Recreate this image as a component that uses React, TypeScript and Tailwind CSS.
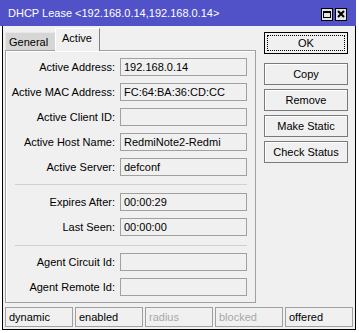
import React from 'react'

const rows1 = [
  { label: 'Active Address:', value: '192.168.0.14' },
  { label: 'Active MAC Address:', value: 'FC:64:BA:36:CD:CC' },
  { label: 'Active Client ID:', value: '' },
  { label: 'Active Host Name:', value: 'RedmiNote2-Redmi' },
  { label: 'Active Server:', value: 'defconf' },
]

const rows2 = [
  { label: 'Expires After:', value: '00:00:29' },
  { label: 'Last Seen:', value: '00:00:00' },
]

const rows3 = [
  { label: 'Agent Circuit Id:', value: '' },
  { label: 'Agent Remote Id:', value: '' },
]

const status = [
  { text: 'dynamic', disabled: false },
  { text: 'enabled', disabled: false },
  { text: 'radius', disabled: true },
  { text: 'blocked', disabled: true },
  { text: 'offered', disabled: false },
]

function Field({ label, value }: { label: string; value: string }) {
  return (
    <div className="flex items-center h-[18px]">
      <div className="w-[109px] text-right pr-[1px] whitespace-nowrap">{label}</div>
      <div className="ml-[4px] w-[127px] h-[18px] border border-[#a0a0a0] bg-[#f0f0f0] pl-[3px] leading-[16px] whitespace-nowrap overflow-hidden">
        {value}
      </div>
    </div>
  )
}

function Separator() {
  return <div className="ml-[8px] w-[232px] h-px bg-[#d0d0d0]" />
}

function SideButton({ children }: { children: React.ReactNode }) {
  return (
    <div className="w-[84px] h-[22px] border border-[#7a7a7a] bg-[#f0f0f0] flex items-center justify-center shadow-[inset_1px_1px_0_#ffffff]">
      {children}
    </div>
  )
}

export default function App() {
  return (
    <div className="w-[359px] h-[333px] bg-white overflow-hidden relative font-['Liberation_Sans',Arial,sans-serif] text-[11px] text-black">
      {/* Title bar */}
      <div className="w-[356px] h-[26px] bg-[#5151c8] flex items-center pl-[8px] pr-[9px]">
        <span className="text-white text-[11px] whitespace-nowrap">DHCP Lease &lt;192.168.0.14,192.168.0.14&gt;</span>
        <div className="ml-auto flex gap-[2px] mt-[2px]">
          <div className="w-[12px] h-[13px] border border-black bg-[#e4e4e4] flex items-center justify-center">
            <div className="w-[8px] h-[7px] border border-black border-t-2" />
          </div>
          <div className="w-[12px] h-[13px] border border-black bg-[#e4e4e4] flex items-center justify-center">
            <svg width="8" height="8" viewBox="0 0 8 8">
              <path d="M1 1L7 7M7 1L1 7" stroke="#000" strokeWidth="2" />
            </svg>
          </div>
        </div>
      </div>

      {/* Window body */}
      <div className="ml-[2px] w-[354px] h-[304px] border-x border-b border-black bg-[#f0f0f0] flex flex-col">
        <div className="flex">
          {/* Tabs and panel */}
          <div className="ml-[2px] flex flex-col">
            <div className="flex items-end h-[24px] pt-[2px]">
              <div className="w-[50px] h-[18px] bg-[#d6d6d6] border-t border-l border-[#e8e8e8] pl-[3px] leading-[18px]">
                General
              </div>
              <div className="relative z-10 -mb-px w-[45px] h-[23px] bg-[#f0f0f0] border-t border-l border-white border-r border-r-[#808080] pl-[6px] leading-[19px]">
                Active
              </div>
            </div>
            <div className="w-[251px] h-[253px] border border-[#a0a0a0] shadow-[inset_1px_1px_0_#ffffff] pt-[7px] pl-[1px] flex flex-col">
              <div className="flex flex-col gap-[7px]">
                {rows1.map((r) => (
                  <Field key={r.label} label={r.label} value={r.value} />
                ))}
              </div>
              <div className="my-[8px]">
                <Separator />
              </div>
              <div className="flex flex-col gap-[7px]">
                {rows2.map((r) => (
                  <Field key={r.label} label={r.label} value={r.value} />
                ))}
              </div>
              <div className="mt-[9px] mb-[7px]">
                <Separator />
              </div>
              <div className="flex flex-col gap-[7px]">
                {rows3.map((r) => (
                  <Field key={r.label} label={r.label} value={r.value} />
                ))}
              </div>
            </div>
          </div>

          {/* Right buttons */}
          <div className="ml-[8px] pt-[6px] flex flex-col">
            <div className="w-[84px] h-[22px] border border-black bg-[#f0f0f0] p-[2px]">
              <div className="w-full h-full border border-dotted border-black flex items-center justify-center">
                OK
              </div>
            </div>
            <div className="mt-[9px] flex flex-col gap-[4px]">
              <SideButton>Copy</SideButton>
              <SideButton>Remove</SideButton>
              <SideButton>Make Static</SideButton>
              <SideButton>Check Status</SideButton>
            </div>
          </div>
        </div>

        {/* Status bar */}
        <div className="mt-[4px] ml-[2px] flex gap-[2px]">
          {status.map((s) => (
            <div
              key={s.text}
              className={`w-[68px] h-[20px] border border-[#a0a0a0] pl-[3px] leading-[18px] ${s.disabled ? 'text-[#a8a8a8]' : 'text-black'}`}
            >
              {s.text}
            </div>
          ))}
        </div>
      </div>
    </div>
  )
}
